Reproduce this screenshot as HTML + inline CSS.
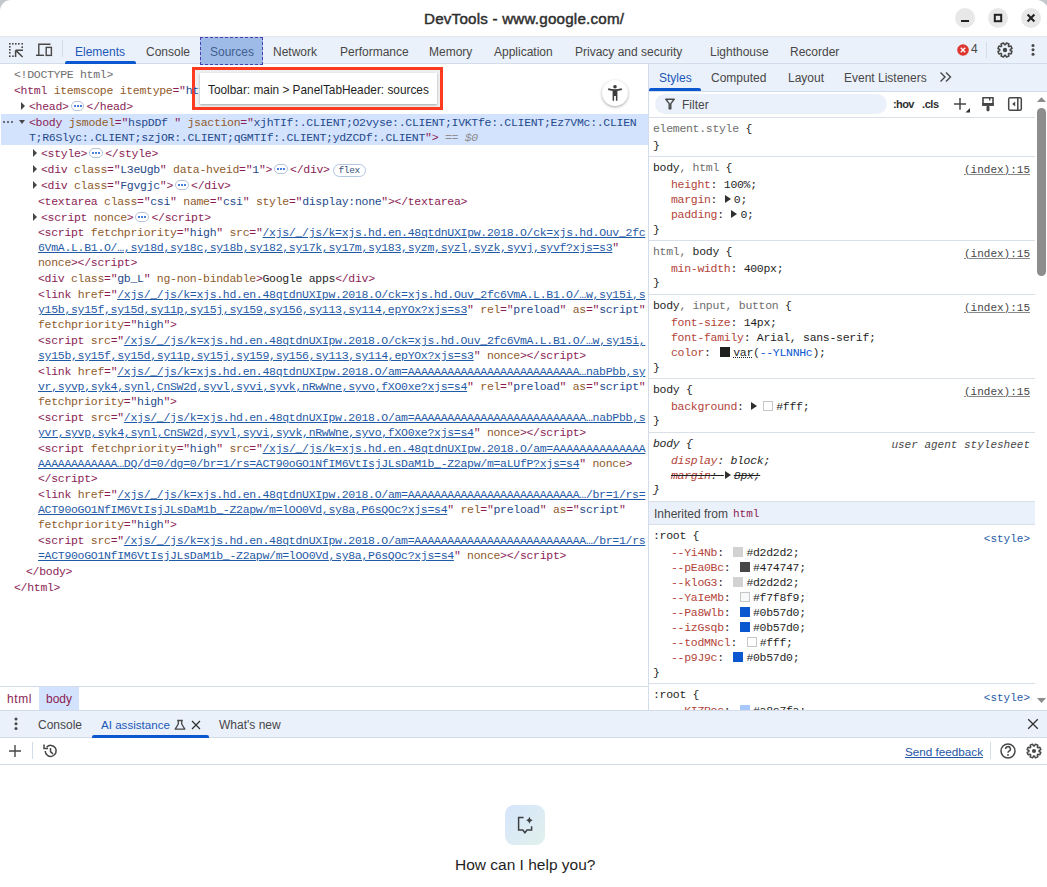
<!DOCTYPE html>
<html><head><meta charset="utf-8">
<style>
*{box-sizing:border-box}
html,body{margin:0;padding:0}
body{width:1047px;height:887px;position:relative;overflow:hidden;background:#fff;font-family:"Liberation Sans",sans-serif;color:#1f1f1f}
.abs{position:absolute}
#title{position:absolute;left:0;top:0;width:1047px;height:36px;background:#fff}
#title .tt{position:absolute;left:424px;top:10px;font-size:15.2px;font-weight:normal;-webkit-text-stroke:0.45px #2e2e2e;letter-spacing:0.2px;color:#2e2e2e;white-space:nowrap;line-height:17px}
.wb{position:absolute;top:8px;width:20px;height:20px;border-radius:50%;background:#e8e8e8}
#tb{position:absolute;left:0;top:36px;width:1047px;height:28px;background:#ebf1fa;border-top:1px solid #e3e6ea;border-bottom:1px solid #d2dcea}
.tab{position:absolute;top:8px;font-size:12px;line-height:14px;color:#474747;white-space:nowrap}
.tab.on{color:#1c58b8}
#elems{position:absolute;left:0;top:64px;width:648px;height:622px;background:#fff;overflow:hidden}
.cl{position:absolute;white-space:pre;font-family:"Liberation Mono",monospace;font-size:11.5px;letter-spacing:-0.3px;line-height:15px;height:15px}
.t{color:#8b1d55}
.a{color:#8f5b2c}
.v{color:#254a8c}
.l{color:#1f5aa6;text-decoration:underline}
.g{color:#6e6e6e}
.x{color:#1f1f1f}
.eq{color:#8f8f8f;font-style:italic}
.sel{position:absolute;left:1px;width:647px;background:#d3e3fd}
.tri{position:absolute;width:0;height:0}
.tri.right{border-left:4.6px solid #474747;border-top:4px solid transparent;border-bottom:4px solid transparent}
.tri.down{border-top:4.3px solid #474747;border-left:3.6px solid transparent;border-right:3.6px solid transparent}
.dots{position:absolute;width:10px;height:3px}
.dots i{position:absolute;top:0;width:2.4px;height:2.4px;background:#474747;border-radius:50%}
.dots i:nth-child(1){left:0}.dots i:nth-child(2){left:4px}.dots i:nth-child(3){left:8px}
.pill{display:inline-block;position:relative;width:13.6px;height:10px;margin:0 2.4px 0 2px;vertical-align:-1px;border:1px solid #b4c2d6;border-radius:5px;background:#fff}
.pill i{position:absolute;top:3px;width:2px;height:2px;background:#0b57d0;border-radius:1px}
.pill i:nth-child(1){left:2px}.pill i:nth-child(2){left:5px}.pill i:nth-child(3){left:8px}
.flex{display:inline-block;position:relative;top:0px;margin-left:3px;width:33px;height:13px;border:1px solid #b3c6e2;border-radius:7px;font-family:"Liberation Mono",monospace;font-size:9.5px;letter-spacing:-0.3px;line-height:12.5px;text-align:center;color:#34507e;vertical-align:top;margin-top:1.5px}
#split{position:absolute;left:648px;top:64px;width:1px;height:647px;background:#d2dcea}
#stabs{position:absolute;left:649px;top:64px;width:398px;height:28px;background:#ebf1fa;border-bottom:1px solid #d2dcea}
#sfilt{position:absolute;left:649px;top:92px;width:398px;height:26px;background:#fff}
.sb{position:absolute;left:649px;width:386px;height:1px;background:#dae0e8}
.sl{position:absolute;white-space:pre;font-family:"Liberation Mono",monospace;font-size:11.5px;letter-spacing:-0.3px;line-height:15px;height:15px}
.sg{color:#6e6e6e}
.px{color:#1f1f1f}
.pn{color:#b3443a}
.vb{color:#0b57d0}
.vr{text-decoration:underline dotted}
.it{font-style:italic}
.strike{text-decoration:line-through}
.sw{display:inline-block;width:10px;height:10px;margin:0 3px 0 3px;vertical-align:-1px}
.mtri{display:inline-block;width:0;height:0;border-left:6px solid #303030;border-top:4px solid transparent;border-bottom:4px solid transparent;margin:0 3px 0 1px;vertical-align:0px}
.src{position:absolute;right:17px;font-family:"Liberation Mono",monospace;font-size:11px;line-height:15px;color:#474747;text-decoration:underline;text-decoration-color:#888}
.ua{position:absolute;right:17px;font-family:"Liberation Mono",monospace;font-size:11px;line-height:15px;color:#474747;font-style:italic}
.styl{position:absolute;right:17px;font-family:"Liberation Mono",monospace;font-size:11px;line-height:15px;color:#1f5aa6}
.inh{position:absolute;left:649px;width:386px;background:#ebf1fa;border-bottom:1px solid #dae0e8}
.inht{position:absolute;left:5px;top:5px;font-size:12px;color:#474747;white-space:pre}
.inhh{position:absolute;left:84px;top:6px;font-family:"Liberation Mono",monospace;font-size:11px;color:#8b1d55}
#crumbs{position:absolute;left:0;top:686px;width:648px;height:25px;background:#fff;border-top:1px solid #d2dcea}
#drawer{position:absolute;left:0;top:710px;width:1047px;height:28px;background:#ebf1fa;border-top:1px solid #d2dcea;border-bottom:1px solid #d2dcea}
#aitb{position:absolute;left:0;top:738px;width:1047px;height:27px;background:#fff;border-bottom:1px solid #d2dcea}
</style></head>
<body>
<div id="title"><div class="tt">DevTools - www.google.com/</div>
 <div class="wb" style="left:955px"></div><div class="wb" style="left:988px"></div><div class="wb" style="left:1021px"></div>
</div>
<div id="tb">
 <div class="tab on" style="left:75px">Elements</div>
 <div class="abs" style="left:65px;top:24px;width:71px;height:3px;background:#0b57d0;border-radius:2px 2px 0 0"></div>
 <div class="tab" style="left:146px">Console</div>
 <div class="abs" style="left:200px;top:0px;width:63px;height:28px;background:#9ebbe8;border:1.5px dashed #4a3fb2;z-index:5"></div>
 <div class="tab" style="left:210px;color:#3f5f8f;z-index:6">Sources</div>
 <div class="tab" style="left:273px">Network</div>
 <div class="tab" style="left:340px">Performance</div>
 <div class="tab" style="left:429px">Memory</div>
 <div class="tab" style="left:494px">Application</div>
 <div class="tab" style="left:575px">Privacy and security</div>
 <div class="tab" style="left:710px">Lighthouse</div>
 <div class="tab" style="left:790px">Recorder</div>
</div>
<div id="elems"><div style="position:absolute;left:0;top:-64px;width:648px;height:750px">
<div class="cl" style="left:14px;top:67px"><span class="g">&lt;!DOCTYPE html&gt;</span></div>
<div class="cl" style="left:14px;top:83px;z-index:10"><span class="t">&lt;html</span><span class="x"> </span><span class="a">itemscope</span><span class="x"> </span><span class="a">itemtype</span><span class="t">="</span><span class="v">htt_p:/schema.org/WebPage</span><span class="t">"</span><span class="x"> </span><span class="a">lang</span><span class="t">="</span><span class="v">en</span><span class="t">"&gt;</span></div>
<div class="tri right" style="left:21px;top:102px"></div>
<div class="cl" style="left:29px;top:99px"><span class="t">&lt;head&gt;</span><span class="pill"><i></i><i></i><i></i></span><span class="t">&lt;/head&gt;</span></div>
<div class="sel" style="top:114px;height:31px"></div>
<div class="dots" style="left:3px;top:121px"><i></i><i></i><i></i></div>
<div class="tri down" style="left:19px;top:120px"></div>
<div class="cl" style="left:29px;top:115px"><span class="t">&lt;body</span><span class="x"> </span><span class="a">jsmodel</span><span class="t">="</span><span class="v">hspDDf </span><span class="t">"</span><span class="x"> </span><span class="a">jsaction</span><span class="t">="</span><span class="v">xjhTIf:.CLIENT;O2vyse:.CLIENT;IVKTfe:.CLIENT;Ez7VMc:.CLIEN</span></div>
<div class="cl" style="left:29px;top:130px"><span class="v">T;R6Slyc:.CLIENT;szjOR:.CLIENT;qGMTIf:.CLIENT;ydZCDf:.CLIENT</span><span class="t">"&gt;</span><span class="eq"> == $0</span></div>
<div class="tri right" style="left:33px;top:149px"></div>
<div class="cl" style="left:41px;top:146px"><span class="t">&lt;style&gt;</span><span class="pill"><i></i><i></i><i></i></span><span class="t">&lt;/style&gt;</span></div>
<div class="tri right" style="left:33px;top:165px"></div>
<div class="cl" style="left:41px;top:162px"><span class="t">&lt;div</span><span class="x"> </span><span class="a">class</span><span class="t">="</span><span class="v">L3eUgb</span><span class="t">"</span><span class="x"> </span><span class="a">data-hveid</span><span class="t">="</span><span class="v">1</span><span class="t">"&gt;</span><span class="pill"><i></i><i></i><i></i></span><span class="t">&lt;/div&gt;</span><span class="flex">flex</span></div>
<div class="tri right" style="left:33px;top:181px"></div>
<div class="cl" style="left:41px;top:178px"><span class="t">&lt;div</span><span class="x"> </span><span class="a">class</span><span class="t">="</span><span class="v">Fgvgjc</span><span class="t">"&gt;</span><span class="pill"><i></i><i></i><i></i></span><span class="t">&lt;/div&gt;</span></div>
<div class="cl" style="left:38px;top:194px"><span class="t">&lt;textarea</span><span class="x"> </span><span class="a">class</span><span class="t">="</span><span class="v">csi</span><span class="t">"</span><span class="x"> </span><span class="a">name</span><span class="t">="</span><span class="v">csi</span><span class="t">"</span><span class="x"> </span><span class="a">style</span><span class="t">="</span><span class="v">display:none</span><span class="t">"&gt;&lt;/textarea&gt;</span></div>
<div class="tri right" style="left:33px;top:213px"></div>
<div class="cl" style="left:41px;top:210px"><span class="t">&lt;script</span><span class="x"> </span><span class="a">nonce</span><span class="t">&gt;</span><span class="pill"><i></i><i></i><i></i></span><span class="t">&lt;/script&gt;</span></div>
<div class="cl" style="left:38px;top:225px"><span class="t">&lt;script</span><span class="x"> </span><span class="a">fetchpriority</span><span class="t">="</span><span class="v">high</span><span class="t">"</span><span class="x"> </span><span class="a">src</span><span class="t">="</span><span class="l">/xjs/_/js/k=xjs.hd.en.48qtdnUXIpw.2018.O/ck=xjs.hd.Ouv_2fc</span></div>
<div class="cl" style="left:38px;top:240px"><span class="l">6VmA.L.B1.O/…,sy18d,sy18c,sy18b,sy182,sy17k,sy17m,sy183,syzm,syzl,syzk,syvj,syvf?xjs=s3</span><span class="t">"</span></div>
<div class="cl" style="left:38px;top:255px"><span class="a">nonce</span><span class="t">&gt;&lt;/script&gt;</span></div>
<div class="cl" style="left:38px;top:271px"><span class="t">&lt;div</span><span class="x"> </span><span class="a">class</span><span class="t">="</span><span class="v">gb_L</span><span class="t">"</span><span class="x"> </span><span class="a">ng-non-bindable</span><span class="t">&gt;</span><span class="x">Google apps</span><span class="t">&lt;/div&gt;</span></div>
<div class="cl" style="left:38px;top:287px"><span class="t">&lt;link</span><span class="x"> </span><span class="a">href</span><span class="t">="</span><span class="l">/xjs/_/js/k=xjs.hd.en.48qtdnUXIpw.2018.O/ck=xjs.hd.Ouv_2fc6VmA.L.B1.O/…w,sy15i,s</span></div>
<div class="cl" style="left:38px;top:302px"><span class="l">y15b,sy15f,sy15d,sy11p,sy15j,sy159,sy156,sy113,sy114,epYOx?xjs=s3</span><span class="t">"</span><span class="x"> </span><span class="a">rel</span><span class="t">="</span><span class="v">preload</span><span class="t">"</span><span class="x"> </span><span class="a">as</span><span class="t">="</span><span class="v">script</span><span class="t">"</span></div>
<div class="cl" style="left:38px;top:317px"><span class="a">fetchpriority</span><span class="t">="</span><span class="v">high</span><span class="t">"&gt;</span></div>
<div class="cl" style="left:38px;top:333px"><span class="t">&lt;script</span><span class="x"> </span><span class="a">src</span><span class="t">="</span><span class="l">/xjs/_/js/k=xjs.hd.en.48qtdnUXIpw.2018.O/ck=xjs.hd.Ouv_2fc6VmA.L.B1.O/…w,sy15i,</span></div>
<div class="cl" style="left:38px;top:348px"><span class="l">sy15b,sy15f,sy15d,sy11p,sy15j,sy159,sy156,sy113,sy114,epYOx?xjs=s3</span><span class="t">"</span><span class="x"> </span><span class="a">nonce</span><span class="t">&gt;&lt;/script&gt;</span></div>
<div class="cl" style="left:38px;top:364px"><span class="t">&lt;link</span><span class="x"> </span><span class="a">href</span><span class="t">="</span><span class="l">/xjs/_/js/k=xjs.hd.en.48qtdnUXIpw.2018.O/am=AAAAAAAAAAAAAAAAAAAAAAAAAA…nabPbb,sy</span></div>
<div class="cl" style="left:38px;top:379px"><span class="l">vr,syvp,syk4,synl,CnSW2d,syvl,syvi,syvk,nRwWne,syvo,fXO0xe?xjs=s4</span><span class="t">"</span><span class="x"> </span><span class="a">rel</span><span class="t">="</span><span class="v">preload</span><span class="t">"</span><span class="x"> </span><span class="a">as</span><span class="t">="</span><span class="v">script</span><span class="t">"</span></div>
<div class="cl" style="left:38px;top:394px"><span class="a">fetchpriority</span><span class="t">="</span><span class="v">high</span><span class="t">"&gt;</span></div>
<div class="cl" style="left:38px;top:410px"><span class="t">&lt;script</span><span class="x"> </span><span class="a">src</span><span class="t">="</span><span class="l">/xjs/_/js/k=xjs.hd.en.48qtdnUXIpw.2018.O/am=AAAAAAAAAAAAAAAAAAAAAAAAAA…nabPbb,s</span></div>
<div class="cl" style="left:38px;top:425px"><span class="l">yvr,syvp,syk4,synl,CnSW2d,syvl,syvi,syvk,nRwWne,syvo,fXO0xe?xjs=s4</span><span class="t">"</span><span class="x"> </span><span class="a">nonce</span><span class="t">&gt;&lt;/script&gt;</span></div>
<div class="cl" style="left:38px;top:441px"><span class="t">&lt;script</span><span class="x"> </span><span class="a">fetchpriority</span><span class="t">="</span><span class="v">high</span><span class="t">"</span><span class="x"> </span><span class="a">src</span><span class="t">="</span><span class="l">/xjs/_/js/k=xjs.hd.en.48qtdnUXIpw.2018.O/am=AAAAAAAAAAAAAA</span></div>
<div class="cl" style="left:38px;top:456px"><span class="l">AAAAAAAAAAAA…DQ/d=0/dg=0/br=1/rs=ACT90oGO1NfIM6VtIsjJLsDaM1b_-Z2apw/m=aLUfP?xjs=s4</span><span class="t">"</span><span class="x"> </span><span class="a">nonce</span><span class="t">&gt;</span></div>
<div class="cl" style="left:38px;top:471px"><span class="t">&lt;/script&gt;</span></div>
<div class="cl" style="left:38px;top:487px"><span class="t">&lt;link</span><span class="x"> </span><span class="a">href</span><span class="t">="</span><span class="l">/xjs/_/js/k=xjs.hd.en.48qtdnUXIpw.2018.O/am=AAAAAAAAAAAAAAAAAAAAAAAAAA…/br=1/rs=</span></div>
<div class="cl" style="left:38px;top:502px"><span class="l">ACT90oGO1NfIM6VtIsjJLsDaM1b_-Z2apw/m=lOO0Vd,sy8a,P6sQOc?xjs=s4</span><span class="t">"</span><span class="x"> </span><span class="a">rel</span><span class="t">="</span><span class="v">preload</span><span class="t">"</span><span class="x"> </span><span class="a">as</span><span class="t">="</span><span class="v">script</span><span class="t">"</span></div>
<div class="cl" style="left:38px;top:517px"><span class="a">fetchpriority</span><span class="t">="</span><span class="v">high</span><span class="t">"&gt;</span></div>
<div class="cl" style="left:38px;top:533px"><span class="t">&lt;script</span><span class="x"> </span><span class="a">src</span><span class="t">="</span><span class="l">/xjs/_/js/k=xjs.hd.en.48qtdnUXIpw.2018.O/am=AAAAAAAAAAAAAAAAAAAAAAAAAA…/br=1/rs</span></div>
<div class="cl" style="left:38px;top:548px"><span class="l">=ACT90oGO1NfIM6VtIsjJLsDaM1b_-Z2apw/m=lOO0Vd,sy8a,P6sQOc?xjs=s4</span><span class="t">"</span><span class="x"> </span><span class="a">nonce</span><span class="t">&gt;&lt;/script&gt;</span></div>
<div class="cl" style="left:26px;top:564px"><span class="t">&lt;/body&gt;</span></div>
<div class="cl" style="left:14px;top:580px"><span class="t">&lt;/html&gt;</span></div>
</div></div>
<div id="split"></div>
<div id="stabs">
 <div class="tab on" style="left:10px;top:7px">Styles</div>
 <div class="abs" style="left:0px;top:24px;width:52px;height:3px;background:#0b57d0;border-radius:2px 2px 0 0"></div>
 <div class="tab" style="left:62px;top:7px">Computed</div>
 <div class="tab" style="left:139px;top:7px">Layout</div>
 <div class="tab" style="left:195px;top:7px">Event Listeners</div>
</div>
<div id="sfilt">
 <div class="abs" style="left:6px;top:2px;width:232px;height:20px;border-radius:10px;background:#ebf1fa"></div>
 <div class="tab" style="left:33px;top:6px">Filter</div>
 <div class="tab" style="left:244px;top:5px;font-weight:bold;font-size:11px;letter-spacing:-0.6px;color:#303030">:hov</div>
 <div class="tab" style="left:273px;top:5px;font-weight:bold;font-size:11px;letter-spacing:-0.4px;color:#303030">.cls</div>
</div>
<div class="sb" style="top:117px"></div>
<div class="sb" style="top:156px"></div>
<div class="sb" style="top:240px"></div>
<div class="sb" style="top:294px"></div>
<div class="sb" style="top:378px"></div>
<div class="sb" style="top:432px"></div>
<div class="sb" style="top:501px"></div>
<div class="sb" style="top:683px"></div>
<div class="inh" style="top:502px;height:23px"><span class="inht">Inherited from </span><span class="inhh">html</span></div>
<div class="sl" style="left:653px;top:121px"><span class="sg">element.style</span><span class="px"> {</span></div>
<div class="sl" style="left:653px;top:138px"><span class="px">}</span></div>
<div class="sl" style="left:653px;top:160px"><span class="px">body</span><span class="sg">, html</span><span class="px"> {</span></div>
<div class="sl" style="left:671px;top:177px"><span class="pn">height</span><span class="px">: </span><span class="px">100%</span><span class="px">;</span></div>
<div class="sl" style="left:671px;top:192px"><span class="pn">margin</span><span class="px">: </span><span class="mtri"></span><span class="px">0</span><span class="px">;</span></div>
<div class="sl" style="left:671px;top:207px"><span class="pn">padding</span><span class="px">: </span><span class="mtri"></span><span class="px">0</span><span class="px">;</span></div>
<div class="sl" style="left:653px;top:222px"><span class="px">}</span></div>
<div class="sl" style="left:653px;top:244px"><span class="sg">html</span><span class="sg">, </span><span class="px">body {</span></div>
<div class="sl" style="left:671px;top:261px"><span class="pn">min-width</span><span class="px">: </span><span class="px">400px</span><span class="px">;</span></div>
<div class="sl" style="left:653px;top:275px"><span class="px">}</span></div>
<div class="sl" style="left:653px;top:298px"><span class="px">body</span><span class="sg">, input, button</span><span class="px"> {</span></div>
<div class="sl" style="left:671px;top:315px"><span class="pn">font-size</span><span class="px">: </span><span class="px">14px</span><span class="px">;</span></div>
<div class="sl" style="left:671px;top:330px"><span class="pn">font-family</span><span class="px">: </span><span class="px">Arial, sans-serif</span><span class="px">;</span></div>
<div class="sl" style="left:671px;top:345px"><span class="pn">color</span><span class="px">: </span><span class="sw" style="background:#1f1f1f;"></span><span class="px vr">var</span><span class="px">(</span><span class="vb">--YLNNHc</span><span class="px">)</span><span class="px">;</span></div>
<div class="sl" style="left:653px;top:360px"><span class="px">}</span></div>
<div class="sl" style="left:653px;top:382px"><span class="px">body {</span></div>
<div class="sl" style="left:671px;top:399px"><span class="pn">background</span><span class="px">: </span><span class="mtri"></span><span class="sw" style="background:#fff;border:1px solid #c4c7c5;"></span><span class="px">#fff</span><span class="px">;</span></div>
<div class="sl" style="left:653px;top:413px"><span class="px">}</span></div>
<div class="sl" style="left:653px;top:436px"><span class="px it">body {</span></div>
<div class="sl" style="left:671px;top:453px"><span class="pn it">display</span><span class="px it">: block;</span></div>
<div class="sl" style="left:671px;top:468px"><span class="strike"><span class="pn it">margin</span><span class="px it">: </span><span class="mtri"></span><span class="px it">8px;</span></span></div>
<div class="sl" style="left:653px;top:482px"><span class="px it">}</span></div>
<div class="sl" style="left:653px;top:528px"><span class="px">:root {</span></div>
<div class="sl" style="left:671px;top:545px"><span class="pn">--Yi4Nb</span><span class="px">: </span><span class="sw" style="background:#d2d2d2;"></span><span class="px">#d2d2d2</span><span class="px">;</span></div>
<div class="sl" style="left:671px;top:560px"><span class="pn">--pEa0Bc</span><span class="px">: </span><span class="sw" style="background:#474747;"></span><span class="px">#474747</span><span class="px">;</span></div>
<div class="sl" style="left:671px;top:575px"><span class="pn">--kloG3</span><span class="px">: </span><span class="sw" style="background:#d2d2d2;"></span><span class="px">#d2d2d2</span><span class="px">;</span></div>
<div class="sl" style="left:671px;top:590px"><span class="pn">--YaIeMb</span><span class="px">: </span><span class="sw" style="background:#f7f8f9;border:1px solid #c4c7c5;"></span><span class="px">#f7f8f9</span><span class="px">;</span></div>
<div class="sl" style="left:671px;top:605px"><span class="pn">--Pa8Wlb</span><span class="px">: </span><span class="sw" style="background:#0b57d0;"></span><span class="px">#0b57d0</span><span class="px">;</span></div>
<div class="sl" style="left:671px;top:620px"><span class="pn">--izGsqb</span><span class="px">: </span><span class="sw" style="background:#0b57d0;"></span><span class="px">#0b57d0</span><span class="px">;</span></div>
<div class="sl" style="left:671px;top:635px"><span class="pn">--todMNcl</span><span class="px">: </span><span class="sw" style="background:#fff;border:1px solid #c4c7c5;"></span><span class="px">#fff</span><span class="px">;</span></div>
<div class="sl" style="left:671px;top:650px"><span class="pn">--p9J9c</span><span class="px">: </span><span class="sw" style="background:#0b57d0;"></span><span class="px">#0b57d0</span><span class="px">;</span></div>
<div class="sl" style="left:653px;top:665px"><span class="px">}</span></div>
<div class="sl" style="left:653px;top:687px"><span class="px">:root {</span></div>
<div class="sl" style="left:671px;top:703px"><span class="pn">--KIZPoc</span><span class="px">: </span><span class="sw" style="background:#a8c7fa;"></span><span class="px">#a8c7fa</span><span class="px">;</span></div>
<div class="src" style="top:163px">(index):15</div>
<div class="src" style="top:247px">(index):15</div>
<div class="src" style="top:301px">(index):15</div>
<div class="src" style="top:385px">(index):15</div>
<div class="ua" style="top:438px">user agent stylesheet</div>
<div class="styl" style="top:532px">&lt;style&gt;</div>
<div class="styl" style="top:691px">&lt;style&gt;</div>
<div id="crumbs">
 <div class="abs" style="left:39px;top:0;width:40px;height:24px;background:#d3e3fd"></div>
 <div class="tab" style="left:7px;top:5px;color:#8b1d55;letter-spacing:0.6px">html</div>
 <div class="tab" style="left:46px;top:5px;color:#8b1d55">body</div>
</div>
<div id="drawer">
 <div class="tab" style="left:38px;top:7px">Console</div>
 <div class="tab on" style="left:101px;top:7px;font-size:11.6px">AI assistance</div>
 <div class="abs" style="left:92px;top:24px;width:117px;height:3px;background:#0b57d0;border-radius:2px 2px 0 0"></div>
 <div class="tab" style="left:219px;top:7px">What's new</div>
</div>
<div id="aitb">
 <div class="tab" style="left:905px;top:7px;font-size:11.7px;color:#2456a6;text-decoration:underline">Send feedback</div>
</div>
<div class="abs" style="left:505px;top:805px;width:40px;height:40px;border-radius:9px;background:linear-gradient(135deg,#d6e5fc,#e1f1ec)"></div>
<div class="abs" style="left:455px;top:856px;font-size:15.5px;line-height:18px;color:#1f1f1f;white-space:nowrap">How can I help you?</div>

<!-- window corner -->
<svg class="abs" style="left:0;top:0" width="14" height="14"><path d="M0 0 H11 A11 11 0 0 0 0 11 Z" fill="#c4c8cd"/></svg>
<svg class="abs" style="left:1027px;top:0" width="20" height="20"><path d="M11 0 A14.3 14.3 0 0 1 20 6 V0 Z" fill="#c4c8cd"/></svg>
<!-- window button glyphs -->
<svg class="abs" style="left:955px;top:8px" width="20" height="20"><rect x="6" y="12" width="8" height="2" fill="#222"/></svg>
<svg class="abs" style="left:988px;top:8px" width="20" height="20"><rect x="6.8" y="6.8" width="6.4" height="6.4" fill="none" stroke="#222" stroke-width="2"/></svg>
<svg class="abs" style="left:1021px;top:8px" width="20" height="20"><path d="M6.6 6.6 L13.4 13.4 M13.4 6.6 L6.6 13.4" stroke="#222" stroke-width="2.1"/></svg>
<!-- inspect icon -->
<svg class="abs" style="left:8px;top:42px" width="17" height="17"><g fill="#474747">
<rect x="1" y="1" width="1.6" height="1.6"/><rect x="4" y="1" width="1.6" height="1.6"/><rect x="7" y="1" width="1.6" height="1.6"/><rect x="10" y="1" width="1.6" height="1.6"/><rect x="13.4" y="1" width="1.6" height="1.6"/>
<rect x="1" y="4" width="1.6" height="1.6"/><rect x="1" y="7" width="1.6" height="1.6"/><rect x="1" y="10" width="1.6" height="1.6"/><rect x="1" y="13.4" width="1.6" height="1.6"/>
<rect x="13.4" y="4.4" width="1.6" height="1.6"/><rect x="4.2" y="13.4" width="1.6" height="1.6"/></g>
<path d="M7.6 8.2 H15 M7.6 8.2 V15 M7.8 8.4 L14.6 15" stroke="#474747" stroke-width="1.5" fill="none"/></svg>
<!-- device icon -->
<svg class="abs" style="left:35px;top:43px" width="18" height="14"><g stroke="#474747" stroke-width="1.4" fill="none">
<path d="M15.5 1.3 H3.8 V12.3"/><path d="M1 12.3 H9"/><rect x="11.2" y="4.4" width="5.2" height="8"/></g></svg>
<div class="abs" style="left:62px;top:40px;width:1px;height:17px;background:#d2dcea"></div>
<!-- error badge -->
<svg class="abs" style="left:957px;top:44px" width="12" height="12"><circle cx="6" cy="6" r="5.8" fill="#dc362e"/><path d="M3.8 3.8 L8.2 8.2 M8.2 3.8 L3.8 8.2" stroke="#fff" stroke-width="1.3"/></svg>
<div class="abs" style="left:971px;top:42px;font-size:12px;line-height:15px;color:#474747">4</div>
<div class="abs" style="left:986px;top:42px;width:1px;height:16px;background:#d2dcea"></div>
<!-- gear -->
<svg class="abs" style="left:996px;top:41px" width="18" height="18"><path d="M14.28 9.49 L16.05 10.48 L15.03 12.94 L13.08 12.38 L12.38 13.08 L12.94 15.03 L10.48 16.05 L9.49 14.28 L8.51 14.28 L7.52 16.05 L5.06 15.03 L5.62 13.08 L4.92 12.38 L2.97 12.94 L1.95 10.48 L3.72 9.49 L3.72 8.51 L1.95 7.52 L2.97 5.06 L4.92 5.62 L5.62 4.92 L5.06 2.97 L7.52 1.95 L8.51 3.72 L9.49 3.72 L10.48 1.95 L12.94 2.97 L12.38 4.92 L13.08 5.62 L15.03 5.06 L16.05 7.52 L14.28 8.51Z" fill="none" stroke="#474747" stroke-width="1.5" stroke-linejoin="round"/><circle cx="9" cy="9" r="2.2" fill="#474747"/></svg>
<!-- kebab top -->
<svg class="abs" style="left:1030px;top:43px" width="6" height="14"><circle cx="3" cy="2.6" r="1.5" fill="#474747"/><circle cx="3" cy="6.8" r="1.5" fill="#474747"/><circle cx="3" cy="11.3" r="1.5" fill="#474747"/></svg>
<!-- >> -->
<svg class="abs" style="left:939px;top:71px" width="14" height="12"><path d="M1.5 1.5 L6 6 L1.5 10.5 M7 1.5 L11.5 6 L7 10.5" stroke="#474747" stroke-width="1.4" fill="none"/></svg>
<!-- filter icon -->
<svg class="abs" style="left:665px;top:98px" width="10" height="12"><path d="M0.8 1.2 H9.2 L5.8 5.6 V10.8 H4.2 V5.6 Z" fill="none" stroke="#474747" stroke-width="1.4" stroke-linejoin="round"/></svg>
<!-- plus w/ corner -->
<svg class="abs" style="left:953px;top:97px" width="19" height="17"><path d="M7 1 V12.8 M1 6.9 H13" stroke="#474747" stroke-width="1.5"/><path d="M17 11 V15.5 H12.5 Z" fill="#303030"/></svg>
<!-- paint brush -->
<svg class="abs" style="left:981px;top:96px" width="14" height="17"><path d="M2 1.8 H12 V9 H2 Z" fill="none" stroke="#474747" stroke-width="1.6"/><path d="M1.2 7 H12.8 V9.8 H1.2Z" fill="#474747"/><rect x="5.5" y="9.8" width="3" height="5.4" rx="1.2" fill="#474747"/><rect x="8" y="1.5" width="1.4" height="3" fill="#474747"/></svg>
<!-- sidebar toggle -->
<svg class="abs" style="left:1007px;top:96px" width="16" height="16"><rect x="1.7" y="1.7" width="12.6" height="12.6" rx="1.5" fill="none" stroke="#474747" stroke-width="1.5"/><path d="M10.8 2 V14" stroke="#474747" stroke-width="1.5"/><path d="M8.2 5.5 V10.5 L5.2 8Z" fill="#474747"/></svg>
<!-- scrollbar -->
<svg class="abs" style="left:1036px;top:96px" width="11" height="7"><path d="M1 6 L5.5 1.2 L10 6Z" fill="#8a8a8a"/></svg>
<div class="abs" style="left:1037px;top:108px;width:9px;height:168px;border-radius:5px;background:#8d8d8d"></div>
<svg class="abs" style="left:1036px;top:697px" width="11" height="7"><path d="M1 1 L5.5 6 L10 1Z" fill="#8a8a8a"/></svg>
<!-- a11y button -->
<div class="abs" style="left:602px;top:80px;width:26px;height:26px;border-radius:50%;background:#fff;box-shadow:0 1px 3px rgba(0,0,0,.35)"></div>
<svg class="abs" style="left:605px;top:83px" width="20" height="20"><circle cx="10" cy="3.8" r="1.8" fill="#3c3c3c"/><path d="M3.2 6.2 Q10 8.2 16.8 6.2" stroke="#3c3c3c" stroke-width="1.8" fill="none"/><path d="M7.6 7.2 H12.4 V17.8 H10.9 V13 H9.1 V17.8 H7.6Z" fill="#3c3c3c"/></svg>
<!-- drawer icons -->
<svg class="abs" style="left:13px;top:717px" width="6" height="14"><circle cx="3" cy="2" r="1.5" fill="#474747"/><circle cx="3" cy="6.8" r="1.5" fill="#474747"/><circle cx="3" cy="11.6" r="1.5" fill="#474747"/></svg>
<svg class="abs" style="left:174px;top:719px" width="12" height="12"><path d="M3.2 1.5 H8.8 M4.3 1.5 V5 L1.2 10.2 H10.8 L7.7 5 V1.5" fill="none" stroke="#474747" stroke-width="1.3" stroke-linejoin="round"/></svg>
<svg class="abs" style="left:191px;top:720px" width="10" height="10"><path d="M1 1 L9 9 M9 1 L1 9" stroke="#303030" stroke-width="1.2"/></svg>
<svg class="abs" style="left:1027px;top:718px" width="12" height="12"><path d="M1.2 1.2 L10.8 10.8 M10.8 1.2 L1.2 10.8" stroke="#303030" stroke-width="1.3"/></svg>
<!-- ai toolbar icons -->
<svg class="abs" style="left:8px;top:744px" width="14" height="14"><path d="M7 1 V13 M1 7 H13" stroke="#474747" stroke-width="1.4"/></svg>
<div class="abs" style="left:32px;top:742px;width:1px;height:17px;background:#d2dcea"></div>
<svg class="abs" style="left:42px;top:743px" width="16" height="16"><path d="M3.2 8 A5.5 5.5 0 1 0 4.6 4.2" fill="none" stroke="#474747" stroke-width="1.5"/><path d="M2 1.6 V5.6 H6" fill="none" stroke="#474747" stroke-width="1.5"/><path d="M8.5 5 V8.6 L11 11" fill="none" stroke="#474747" stroke-width="1.5"/></svg>
<div class="abs" style="left:990px;top:742px;width:1px;height:17px;background:#d2dcea"></div>
<svg class="abs" style="left:999px;top:742px" width="18" height="18"><circle cx="9" cy="9" r="7" fill="none" stroke="#474747" stroke-width="1.5"/><path d="M6.6 7.1 A2.4 2.4 0 1 1 9.8 9.3 C9.2 9.6 9 10 9 10.8" fill="none" stroke="#474747" stroke-width="1.5"/><circle cx="9" cy="12.9" r="0.95" fill="#474747"/></svg>
<svg class="abs" style="left:1025px;top:742px" width="18" height="18"><path d="M14.08 9.47 L15.85 10.44 L14.86 12.83 L12.92 12.26 L12.26 12.92 L12.83 14.86 L10.44 15.85 L9.47 14.08 L8.53 14.08 L7.56 15.85 L5.17 14.86 L5.74 12.92 L5.08 12.26 L3.14 12.83 L2.15 10.44 L3.92 9.47 L3.92 8.53 L2.15 7.56 L3.14 5.17 L5.08 5.74 L5.74 5.08 L5.17 3.14 L7.56 2.15 L8.53 3.92 L9.47 3.92 L10.44 2.15 L12.83 3.14 L12.26 5.08 L12.92 5.74 L14.86 5.17 L15.85 7.56 L14.08 8.53Z" fill="none" stroke="#474747" stroke-width="1.5" stroke-linejoin="round"/><circle cx="9" cy="9" r="2.1" fill="#474747"/></svg>
<!-- AI glyph -->
<svg class="abs" style="left:505px;top:805px" width="40" height="40"><path d="M18.6 12.6 H13.6 V25 H17.8 L19.9 27.8 L22 25 H26.6 V21.2" fill="none" stroke="#3c4043" stroke-width="1.5"/><path d="M24.4 11.8 Q24.9 14.8 27.6 15.3 Q24.9 15.8 24.4 18.8 Q23.9 15.8 21.2 15.3 Q23.9 14.8 24.4 11.8Z" fill="#3c4043"/></svg>

<!-- tooltip -->
<div class="abs" style="left:192px;top:67px;width:251px;height:43px;border:3.5px solid #ff3b1f;background:#eceef0"></div>
<div class="abs" style="left:200px;top:73px;width:237px;height:31px;background:#fff;box-shadow:0 1px 2px rgba(0,0,0,.3);z-index:11"></div>
<div class="abs" style="z-index:12;left:208px;top:82.5px;font-size:11.85px;line-height:14px;color:#1f1f1f;white-space:nowrap">Toolbar: main &gt; PanelTabHeader: sources</div>
</body></html>
